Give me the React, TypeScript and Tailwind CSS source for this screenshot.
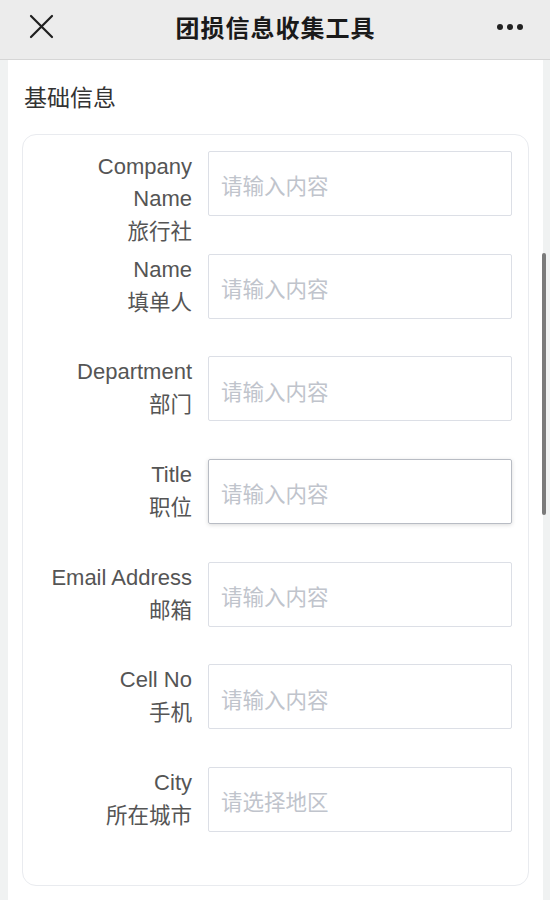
import React from 'react';

const fields = [
  { en: ['Company', 'Name'], zh: '旅行社', ph: '请输入内容' },
  { en: ['Name'], zh: '填单人', ph: '请输入内容' },
  { en: ['Department'], zh: '部门', ph: '请输入内容' },
  { en: ['Title'], zh: '职位', ph: '请输入内容', focus: true },
  { en: ['Email Address'], zh: '邮箱', ph: '请输入内容' },
  { en: ['Cell No'], zh: '手机', ph: '请输入内容' },
  { en: ['City'], zh: '所在城市', ph: '请选择地区' },
];

export default function App() {
  return (
    <div
      className="h-[900px] w-[550px] overflow-hidden bg-[#f0f2f2] flex flex-col"
      style={{ fontFamily: '"Liberation Sans", "Noto Sans CJK SC", sans-serif' }}
    >
      {/* Header */}
      <div className="h-[60px] shrink-0 bg-[#ececec] border-b border-[#d6d6d6] flex items-center justify-between pl-[29px] pr-[27px] pb-[6px]">
        <svg width="25" height="25" viewBox="0 0 25 25" className="text-[#1f1f1f]">
          <path d="M2 2L23 23M23 2L2 23" stroke="currentColor" strokeWidth="2.2" strokeLinecap="round" />
        </svg>
        <div className="text-[24px] font-bold text-[#1a1a1a] tracking-[1px]" style={{ fontFamily: '"Noto Sans CJK SC", sans-serif' }}>
          团损信息收集工具
        </div>
        <div className="flex gap-[4px]">
          <span className="w-[6px] h-[6px] rounded-full bg-[#222]" />
          <span className="w-[6px] h-[6px] rounded-full bg-[#222]" />
          <span className="w-[6px] h-[6px] rounded-full bg-[#222]" />
        </div>
      </div>

      <div className="flex flex-1 min-h-0">
        {/* White panel */}
        <div className="ml-[8px] w-[535px] bg-white px-[14px] pt-[21px]">
          <div className="text-[23px] text-[#333] leading-[30px] pl-[2px]" style={{ fontFamily: '"Noto Sans CJK SC", sans-serif' }}>
            基础信息
          </div>
          <div className="mt-[23px] border border-[#e9ebef] rounded-[14px] pt-[16px] pb-[15px] pr-[16px]">
            {fields.map((f, i) => (
              <div key={i} className="flex items-start h-[65px] mb-[37.67px]">
                <div className="w-[169px] shrink-0 text-right text-[22px] leading-[32px] text-[#555]">
                  {f.en.map((t) => (
                    <div key={t}>{t}</div>
                  ))}
                  <div className="text-[21.5px] leading-[30px]" style={{ fontFamily: '"Noto Sans CJK SC", sans-serif' }}>{f.zh}</div>
                </div>
                <div
                  className={
                    f.focus
                      ? 'ml-[16px] flex-1 h-[65px] border border-[#b8bcc4] rounded-[2px] shadow-[0_1px_4px_rgba(0,0,0,0.15)] flex items-center pl-[12px] pt-[4px]'
                      : 'ml-[16px] flex-1 h-[65px] border border-[#dcdfe6] rounded-[2px] flex items-center pl-[12px] pt-[4px]'
                  }
                >
                  <span className="text-[21.5px] text-[#c0c4cc]" style={{ fontFamily: '"Noto Sans CJK SC", sans-serif' }}>
                    {f.ph}
                  </span>
                </div>
              </div>
            ))}
          </div>
        </div>
        {/* Scrollbar track */}
        <div className="flex-1 relative">
          <div className="absolute left-[-1px] top-[193px] w-[4px] h-[262px] rounded-full bg-[#7b7b7b]" />
        </div>
      </div>
    </div>
  );
}
